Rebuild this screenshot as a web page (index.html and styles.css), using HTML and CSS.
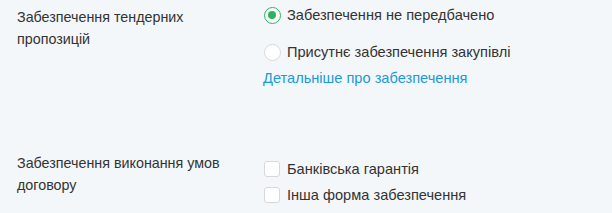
FILE: index.html
```html
<!DOCTYPE html>
<html lang="uk">
<head>
    <meta charset="UTF-8">
    <meta name="viewport" content="width=device-width, initial-scale=1.0">
    <title>Забезпечення</title>
    <link rel="stylesheet" href="styles.css">
</head>
<body>
    <div class="form-section">
        <div class="form-row tender">
            <div class="row-label">Забезпечення тендерних пропозицій</div>
            <div class="row-options">
                <label class="radio-item">
                    <span class="radio checked"></span>
                    Забезпечення не передбачено
                </label>
                <label class="radio-item second">
                    <span class="radio"></span>
                    Присутнє забезпечення закупівлі
                </label>
                <a href="#" class="more-link">Детальніше про забезпечення</a>
            </div>
        </div>
        <div class="form-row contract">
            <div class="row-label">Забезпечення виконання умов договору</div>
            <div class="row-options">
                <label class="check-item">
                    <span class="checkbox"></span>
                    Банківська гарантія
                </label>
                <label class="check-item">
                    <span class="checkbox"></span>
                    Інша форма забезпечення
                </label>
            </div>
        </div>
    </div>
</body>
</html>
```

FILE: styles.css
```css
body {
    margin: 0;
    background-color: #f4f7fa;
    font-family: "Liberation Sans", Arial, sans-serif;
    font-size: 14.6px;
    color: #333;
}
.form-section {
    padding: 0 0 0 17px;
}
.form-row {
    display: grid;
    grid-template-columns: 246px 1fr;
}
.form-row.tender {
    padding-top: 6px;
}
.form-row.contract {
    padding-top: 63px;
}
.row-label {
    font-size: 14.3px;
    line-height: 22px;
    width: 220px;
}
.row-options {
    display: flex;
    flex-direction: column;
    align-items: flex-start;
}
.tender .row-options {
    margin-top: -2px;
}
.radio-item,
.check-item {
    display: flex;
    align-items: center;
    gap: 7px;
    line-height: 22px;
}
.radio-item.second {
    margin-top: 15px;
}
.radio {
    width: 17px;
    height: 17px;
    border: 1px solid #d5d9de;
    border-radius: 50%;
    background: #fff;
    box-sizing: border-box;
    position: relative;
    margin-left: 1px;
}
.radio.checked {
    border: 1.5px solid #2bb55a;
}
.radio.checked::after {
    content: "";
    position: absolute;
    left: 3px;
    top: 3px;
    width: 8px;
    height: 8px;
    border-radius: 50%;
    background: #2bb55a;
}
.radio-item .radio {
    margin-right: -1px;
}
.more-link {
    color: #1a9ad6;
    text-decoration: none;
    line-height: 22px;
    margin-top: 4px;
}
.contract .row-options {
    margin-top: 6px;
}
.check-item {
    margin-bottom: 4px;
}
.checkbox {
    width: 16px;
    height: 16px;
    border: 1px solid #d5d9de;
    border-radius: 3px;
    background: #fff;
    box-sizing: border-box;
    margin-left: 1px;
}
```
